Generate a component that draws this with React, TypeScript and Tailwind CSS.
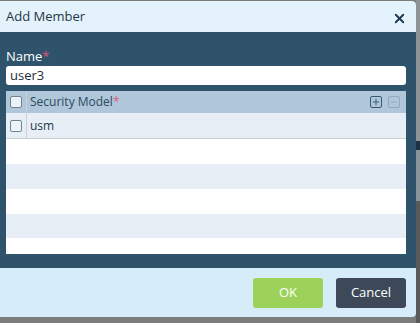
import { Plus, Minus, X } from "lucide-react";

const Checkbox = () => (
    <span className="block h-[12px] w-[12px] rounded-[2px] border border-[#6f8497] bg-[#edf2f7]" />
);

const Req = () => <span className="text-[#e0587a]">*</span>;

export default function App() {
    const stripes = ["bg-white h-[25px]", "bg-[#e7eef6] h-[25px]", "bg-white h-[25px]", "bg-[#e7eef6] h-[24px]", "bg-white flex-1"];

    return (
        <div className="flex h-[323px] w-[420px] bg-[#575757] font-['Open_Sans',sans-serif]">
            <div className="flex w-[416px] flex-col pt-px bg-[#7c7c7c]">
                <div className="flex h-[316px] flex-col overflow-hidden rounded-r-[4px] bg-[#2e536a]">
                    <div className="flex h-[31px] items-center justify-between bg-[#e3f2fb] pl-[6px] pr-[9px]">
                        <span className="text-[13px] text-[#263845]">Add Member</span>
                        <X size={15} strokeWidth={3} className="mt-[3px] text-[#1d3a52]" />
                    </div>

                    <div className="flex h-[236px] flex-col pl-[6px] pr-[10px] pt-[16px]">
                        <label className="text-[13px] leading-[17px] text-white">
                            Name<Req />
                        </label>
                        <div className="mt-[1px] flex h-[19px] items-center rounded-[3px] bg-white px-[4px] text-[13px] text-[#1e2b36]">
                            user3
                        </div>

                        <div className="mt-[6px] flex h-[163px] flex-col bg-white">
                            <div className="flex h-[22px] items-center bg-[#afc7d9]">
                                <div className="flex h-full w-[21px] items-center justify-center border-r border-[#c8d3dc]">
                                    <Checkbox />
                                </div>
                                <span className="ml-[3px] flex-1 text-[12px] text-[#2b4a61]">
                                    Security Model<Req />
                                </span>
                                <div className="mr-[6px] flex gap-[6px]">
                                    <span className="flex h-[12px] w-[12px] items-center justify-center rounded-[2px] border border-[#3a5b77] text-[#2f4d66]">
                                        <Plus size={10} strokeWidth={2} />
                                    </span>
                                    <span className="flex h-[12px] w-[12px] items-center justify-center rounded-[2px] border border-[#93a9ba] text-[#93a9ba]">
                                        <Minus size={10} strokeWidth={2} />
                                    </span>
                                </div>
                            </div>
                            <div className="flex h-[26px] items-center border-b border-[#c9cdd1] bg-[#e7eef6]">
                                <div className="flex h-full w-[21px] items-center justify-center border-r border-[#c8d3dc]">
                                    <Checkbox />
                                </div>
                                <span className="ml-[3px] text-[12px] text-[#24394a]">usm</span>
                            </div>
                            {stripes.map((s, i) => (
                                <div key={i} className={s} />
                            ))}
                        </div>
                    </div>

                    <div className="flex flex-1 items-start justify-end gap-[13px] bg-[#d6ecf8] pr-[10px] pt-[10px]">
                        <button className="h-[30px] w-[70px] rounded-[3px] bg-[#9cd25a] text-[13px] text-white">OK</button>
                        <button className="h-[30px] w-[70px] rounded-[3px] bg-[#3d4959] text-[13px] text-white">Cancel</button>
                    </div>
                </div>
            </div>
            <div className="flex w-[4px] flex-col">
                <div className="h-[141px] bg-[#8e9396]" />
                <div className="h-[9px] bg-[#1e3142]" />
                <div className="h-[51px] bg-[#89939a]" />
                <div className="flex-1 bg-[#5a5a5a]" />
            </div>
        </div>
    );
}
